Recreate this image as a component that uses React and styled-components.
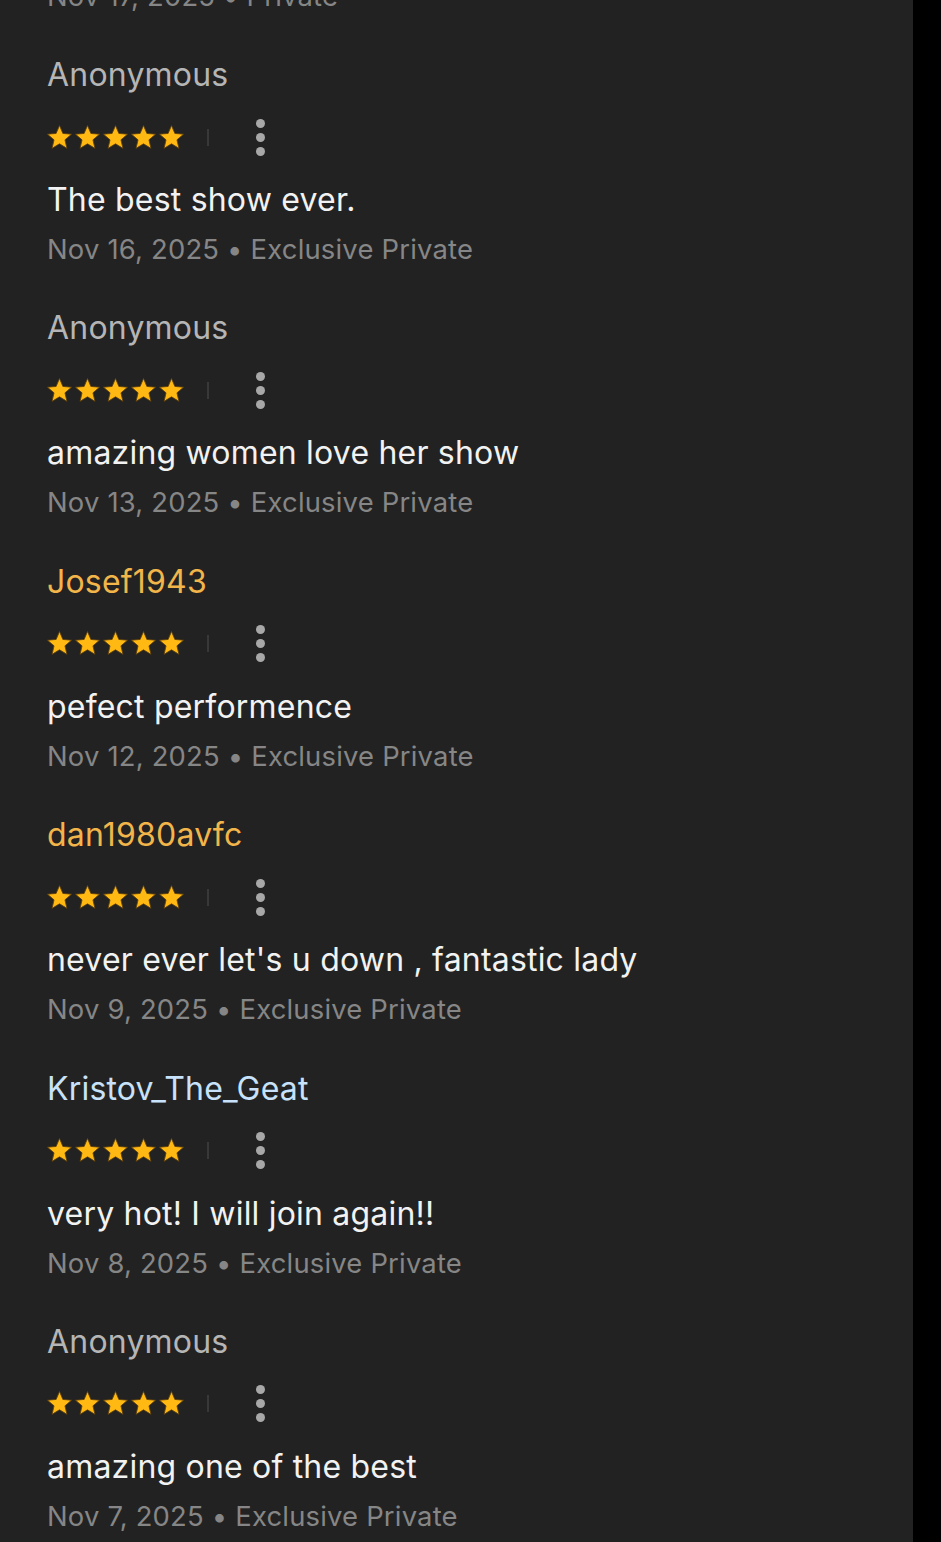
import React from 'react';
import styled, { createGlobalStyle } from 'styled-components';

const GlobalStyle = createGlobalStyle`
  html, body {
    margin: 0;
    padding: 0;
    background: #000;
    font-family: Inter, "Noto Sans", "Liberation Sans", sans-serif;
    -webkit-font-smoothing: antialiased;
  }
`;

const Screen = styled.div`
  width: 913px;
  height: 1542px;
  overflow: hidden;
  background: #222222;
`;

// the list is scrolled: the previous review's date is cut at the top edge
const Feed = styled.div`
  margin-top: -22.4px;
  padding-left: 47px;
`;

const Review = styled.div`
  padding-bottom: 41.4px;
`;

const Name = styled.div`
  font-size: 32px;
  line-height: 40px;
  height: 40px;
  color: ${p => p.color || '#b5b5b5'};
  letter-spacing: 0.2px;
`;

const RatingRow = styled.div`
  display: flex;
  align-items: center;
  height: 34px;
  margin-top: 25px;
`;

const Stars = styled.div`
  display: flex;
  gap: 3px;
`;

const Divider = styled.span`
  width: 2px;
  height: 17px;
  background: #383838;
  margin-left: 23px;
`;

const Kebab = styled.button`
  display: flex;
  flex-direction: column;
  align-items: center;
  gap: 5px;
  margin-left: 47px;
  padding: 0;
  border: 0;
  background: none;

  span {
    width: 9px;
    height: 9px;
    border-radius: 50%;
    background: #a8a8a8;
  }
`;

const Text = styled.div`
  font-size: 32px;
  line-height: 40px;
  color: #f2f2f2;
  margin-top: 26px;
  letter-spacing: 0.2px;
`;

const Meta = styled.div`
  font-size: 27.4px;
  line-height: 36px;
  color: #868686;
  margin-top: ${p => (p.$first ? 0 : 11)}px;
  letter-spacing: 0.2px;
`;

const Star = () => (
  <svg width="25" height="25" viewBox="1.6 1.6 20.8 20.8">
    <path
      d="M12 17.27L18.18 21l-1.64-7.03L22 9.24l-7.19-.61L12 2 9.19 8.63 2 9.24l5.46 4.73L5.82 21z"
      fill="#ffb912"
      stroke="#5e400c"
      strokeWidth="0.7"
      strokeLinejoin="round"
    />
  </svg>
);

const reviews = [
  { name: 'Anonymous', text: 'The best show ever.', date: 'Nov 16, 2025', type: 'Exclusive Private' },
  { name: 'Anonymous', text: 'amazing women love her show', date: 'Nov 13, 2025', type: 'Exclusive Private' },
  { name: 'Josef1943', color: '#f2b54a', text: 'pefect performence', date: 'Nov 12, 2025', type: 'Exclusive Private' },
  { name: 'dan1980avfc', color: '#f2b54a', text: "never ever let's u down , fantastic lady", date: 'Nov 9, 2025', type: 'Exclusive Private' },
  { name: 'Kristov_The_Geat', color: '#c8e2fb', text: 'very hot! I will join again!!', date: 'Nov 8, 2025', type: 'Exclusive Private' },
  { name: 'Anonymous', text: 'amazing one of the best', date: 'Nov 7, 2025', type: 'Exclusive Private' },
];

export default function App() {
  return (
    <>
      <GlobalStyle />
      <Screen>
        <Feed>
          <Review>
            <Meta $first>Nov 17, 2025 • Private</Meta>
          </Review>
          {reviews.map((r, i) => (
            <Review key={i}>
              <Name color={r.color}>{r.name}</Name>
              <RatingRow>
                <Stars>
                  {[0, 1, 2, 3, 4].map(s => <Star key={s} />)}
                </Stars>
                <Divider />
                <Kebab aria-label="More">
                  <span />
                  <span />
                  <span />
                </Kebab>
              </RatingRow>
              <Text>{r.text}</Text>
              <Meta>{r.date} • {r.type}</Meta>
            </Review>
          ))}
        </Feed>
      </Screen>
    </>
  );
}
